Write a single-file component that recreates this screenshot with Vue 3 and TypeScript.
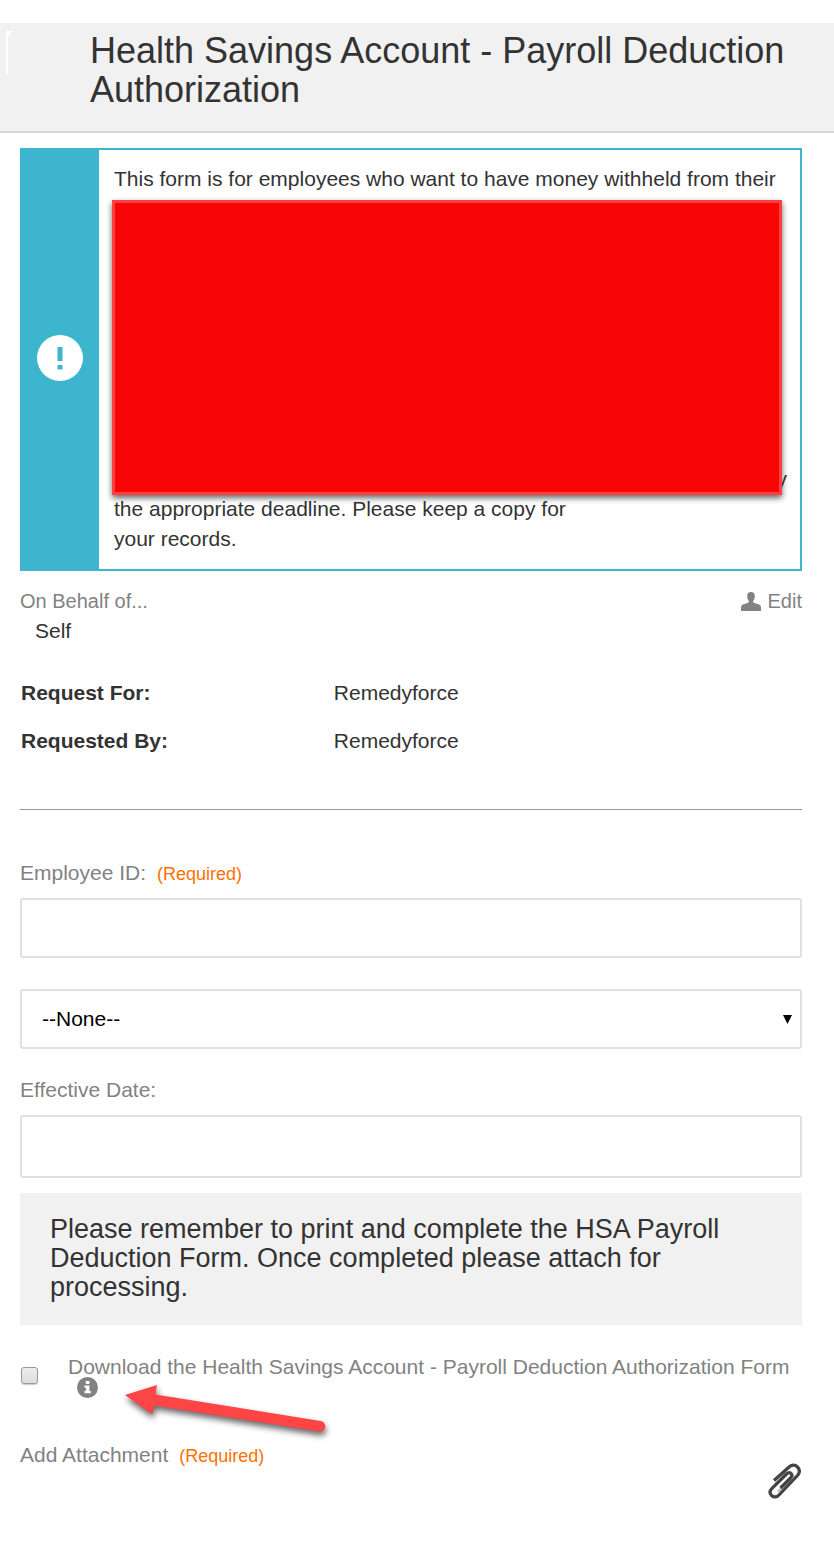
<script setup lang="ts">
import { ref } from 'vue'

interface Party {
  label: string
  value: string
}

const parties: Party[] = [
  { label: 'Request For:', value: 'Remedyforce' },
  { label: 'Requested By:', value: 'Remedyforce' },
]

const employeeId = ref('')
const choice = ref('')
const effectiveDate = ref('')
const downloaded = ref(false)
</script>

<template>
  <div class="page">
    <header class="header">
      <span class="thumb" aria-hidden="true"></span>
      <h1 class="title">Health Savings Account - Payroll Deduction Authorization</h1>
    </header>

    <main class="content">
      <section class="alert">
        <div class="alert-side">
          <svg class="alert-icon" viewBox="0 0 46 46" aria-hidden="true">
            <circle cx="23" cy="23" r="23" fill="#fff" />
            <path d="M20.500 12h5v14h-5zM20.500 30h5v4.500h-5z" fill="#3db5ce" />
          </svg>
        </div>
        <div class="alert-text">
          <p>This form is for employees who want to have money withheld from their</p>
          <div class="hidden-lines">
            <span>y</span>
            <div class="redaction"></div>
          </div>
          <p>the appropriate deadline. Please keep a copy for<br />your records.</p>
        </div>
      </section>

      <section class="behalf">
        <div>
          <h2 class="behalf-label">On Behalf of...</h2>
          <p class="behalf-name">Self</p>
        </div>
        <button type="button" class="edit">
          <svg class="person" viewBox="0 0 20 19" aria-hidden="true">
            <path
              d="M10 0c2.500 0 3.800 1.500 3.800 4 0 2.200-.6 3.900-1.600 4.800v1.300c0 .5.500.8 1.200 1l4 1.200c1.800.6 2.600 1.700 2.600 3.400V19H0v-3.300c0-1.700.8-2.800 2.600-3.400l4-1.200c.7-.2 1.200-.5 1.200-1V8.800C6.800 7.900 6.200 6.200 6.200 4 6.200 1.500 7.500 0 10 0z"
              fill="#828282"
            />
          </svg>
          <span>Edit</span>
        </button>
      </section>

      <table class="parties">
        <tbody>
          <tr v-for="party in parties" :key="party.label">
            <th scope="row">{{ party.label }}</th>
            <td>{{ party.value }}</td>
          </tr>
        </tbody>
      </table>

      <hr class="rule" />

      <form class="form" @submit.prevent>
        <div class="label-row">
          <label for="employee-id">Employee ID:</label>
          <span class="required">(Required)</span>
        </div>
        <input id="employee-id" v-model="employeeId" class="control" type="text" required />

        <div class="select-wrap">
          <select v-model="choice" class="control" aria-label="Selection">
            <option value="">--None--</option>
          </select>
          <svg class="caret" viewBox="0 0 9 9" aria-hidden="true"><path d="M0 0h9L4.500 9z" /></svg>
        </div>

        <div class="label-row date-label">
          <label for="effective-date">Effective Date:</label>
        </div>
        <input id="effective-date" v-model="effectiveDate" class="control tall" type="text" />

        <p class="notice">
          Please remember to print and complete the HSA Payroll Deduction Form. Once completed please attach for
          processing.
        </p>

        <div class="download">
          <input id="download" v-model="downloaded" type="checkbox" class="check" />
          <div class="download-text">
            <label for="download">Download the Health Savings Account - Payroll Deduction Authorization Form</label>
            <button type="button" class="info" aria-label="Information">
              <svg viewBox="0 0 21 21" aria-hidden="true">
                <circle cx="10.500" cy="10.500" r="10.500" fill="#828282" />
                <path d="M8.800 4h3.600v3H8.800zM7.500 8.500h4.900v5.400h1.400v2.300H7.500v-2.300h1.400v-3.100H7.500z" fill="#fff" />
              </svg>
            </button>
          </div>
          <svg class="arrow" viewBox="0 0 220 70" aria-hidden="true">
            <path
              d="M5 15L37 5L35.500 14.500L200.500 41A5 5 0 0 1 199.500 51.500L34 25.500L32.500 34.500Z"
              fill="#fd4545"
            />
          </svg>
        </div>

        <div class="label-row attach-label">
          <span>Add Attachment</span>
          <span class="required">(Required)</span>
        </div>
        <button type="button" class="clip" aria-label="Add Attachment">
          <svg viewBox="0 0 34 36" aria-hidden="true" fill="none" stroke-linejoin="round">
            <path d="M8 21L20 9.500M10 29L26 12" stroke="#c4c4c4" stroke-width="3" />
            <path
              d="M6 17.500L20.500 4.500C23.500 1.500 27 1.500 29.500 4C32 6.500 32 9.500 29.500 12.500L11.500 31.500C9 34.500 5.800 34.600 3.600 32.500C1.400 30.300 1.500 27.800 4 25.300L18.500 11C20.300 9.400 22 9.400 23 10.500C24.200 11.700 24 13.400 22.500 15L12.500 25"
              stroke="#444"
              stroke-width="3.200"
            />
          </svg>
        </button>
      </form>
    </main>
  </div>
</template>

<style>
body {
  margin: 0;
  background: #fff;
}
</style>

<style scoped>
.page {
  padding-top: 23px;
  font-family: 'Liberation Sans', Arial, sans-serif;
  font-size: 21px;
  line-height: 30px;
  color: #333;
}
h1, h2, p {
  margin: 0;
  font-weight: 400;
}
button {
  padding: 0;
  border: 0;
  background: none;
  font: inherit;
  cursor: pointer;
}
svg {
  display: block;
}
.header {
  display: flex;
  padding: 8px 32px 22px 6px;
  background: #f1f1f1;
  border-bottom: 2px solid #d8d8d8;
}
.thumb {
  box-sizing: border-box;
  flex: none;
  width: 40px;
  height: 43px;
  margin-right: 44px;
  border-left: 2px solid #fff;
  background: radial-gradient(circle at 100% 100%, transparent 5px, #fff 6px) 0 0 / 6px 6px no-repeat;
}
.title {
  font-size: 36px;
  line-height: 39px;
}
.content {
  padding: 15px 32px 40px 20px;
}
.alert {
  display: flex;
  border: 2px solid #3db5ce;
  border-left: 0;
}
.alert-side {
  display: flex;
  flex: none;
  box-sizing: border-box;
  align-items: center;
  justify-content: center;
  width: 79px;
  padding-bottom: 3px;
  background: #3db5ce;
}
.alert-icon {
  width: 46px;
  height: 46px;
}
.alert-text {
  flex: 1;
  padding: 14px 13px 15px 15px;
}
.hidden-lines {
  position: relative;
  display: flex;
  align-items: flex-end;
  justify-content: flex-end;
  height: 300px;
}
.redaction {
  position: absolute;
  inset: 6px 5px -1px -2px;
  border: 3px solid #fd4040;
  background: #f80505;
  box-shadow: 0 3px 6px rgba(0, 0, 0, 0.6);
}
.behalf {
  display: flex;
  align-items: flex-start;
  justify-content: space-between;
  margin: 15px 0 23px;
}
.behalf-label {
  font-size: 20px;
  color: #828282;
}
.behalf-name {
  padding-left: 15px;
}
.edit {
  display: flex;
  align-items: center;
  gap: 7px;
  font-size: 20px;
  color: #828282;
}
.person {
  width: 20px;
  height: 19px;
}
.parties {
  width: 100%;
  table-layout: fixed;
  border-collapse: collapse;
}
.parties th,
.parties td {
  box-sizing: border-box;
  height: 48px;
  padding: 0 1px;
  text-align: left;
}
.parties th {
  width: 40%;
}
.rule {
  height: 1px;
  margin: 44px 0 48px;
  border: 0;
  background: #999;
}
.label-row {
  display: flex;
  align-items: baseline;
  gap: 11px;
  color: #828282;
}
.required {
  font-size: 18px;
  color: #ff7000;
}
.control {
  box-sizing: border-box;
  display: block;
  width: 100%;
  height: 60px;
  margin: 9px 0 0;
  padding: 0 20px;
  border: 2px solid #e0e0e0;
  border-radius: 3px;
  background: #fff;
  font: inherit;
  color: #000;
  appearance: none;
}
.tall {
  height: 63px;
  margin-top: 10px;
}
.select-wrap {
  position: relative;
  margin-top: 31px;
}
.select-wrap .control {
  margin: 0;
}
.caret {
  position: absolute;
  top: 26px;
  right: 10px;
  width: 9px;
  height: 9px;
  pointer-events: none;
}
.date-label {
  margin-top: 26px;
}
.notice {
  margin-top: 15px;
  padding: 22px 30px 23px;
  background: #f1f1f1;
  font-size: 27px;
  line-height: 29px;
}
.download {
  position: relative;
  display: flex;
  align-items: center;
  margin-top: 31px;
  color: #828282;
}
.check {
  flex: none;
  box-sizing: border-box;
  width: 17px;
  height: 17px;
  margin: 0 30px 4px 1px;
  border: 1px solid #999;
  border-radius: 3px;
  background: linear-gradient(#ececec, #dcdcdc);
  box-shadow: 0 1px 1px #ccc;
  appearance: none;
}
.check:checked {
  background: #828282;
}
.download-text {
  line-height: 21px;
}
.info {
  display: block;
  width: 21px;
  height: 21px;
  margin-left: 9px;
}
.arrow {
  position: absolute;
  top: 24px;
  left: 100px;
  width: 220px;
  height: 70px;
  overflow: visible;
  pointer-events: none;
  filter: drop-shadow(1px 4px 3px rgba(0, 0, 0, 0.6));
}
.attach-label {
  margin-top: 42px;
}
.clip {
  display: block;
  width: 34px;
  height: 36px;
  margin: -8px 0 0 auto;
}
</style>
